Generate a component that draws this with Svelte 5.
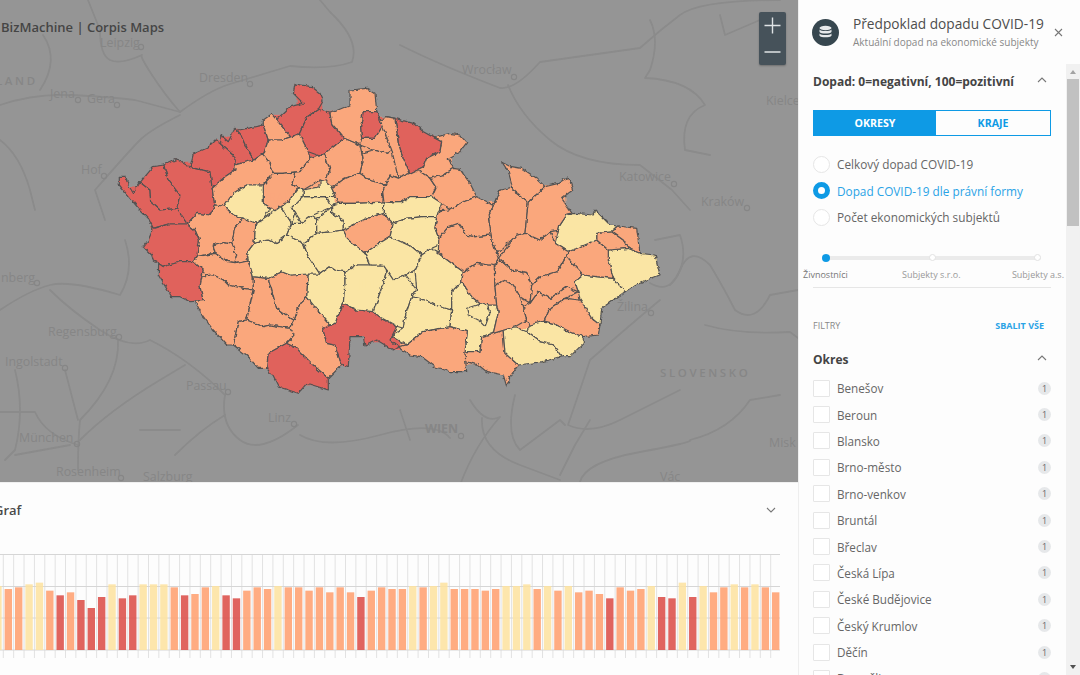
<script>
    // district outlines traced in two local frames, 3x scale
    const west = [
        ["r", "58,322 78,322 85,345 100,370 118,335 150,360 152,395 180,420 230,415 262,462 205,462 160,475 145,445 120,420 90,385 58,345"],
        ["r", "130,325 160,290 192,285 205,330 240,375 230,415 180,420 152,395 150,360 118,335"],
        ["r", "192,285 230,268 270,292 330,305 335,380 345,405 330,435 290,430 262,450 230,415 240,375 205,330"],
        ["r", "270,292 280,252 320,235 345,210 362,222 405,260 405,300 375,320 335,355 330,305"],
        ["r", "362,195 385,215 405,175 420,190 440,235 462,270 420,285 405,260 362,222"],
        ["r", "405,175 420,172 490,165 505,210 480,245 462,270 440,235 420,190"],
        ["o", "490,150 515,132 545,170 570,195 545,210 510,220 505,210 490,165"],
        ["r", "585,42 635,50 660,70 670,92 655,118 622,140 598,192 570,192 528,150 570,110 610,100 580,70"],
        ["r", "622,140 655,118 690,130 695,160 732,205 695,235 660,258 625,245 598,192"],
        ["o", "690,130 750,105 750,60 800,55 825,70 830,125 790,125 782,170 785,205 780,225 732,205 695,160"],
        ["r", "790,125 830,125 845,120 845,170 825,205 785,205 782,170"],
        ["o", "780,225 785,205 825,205 845,170 860,140 885,145 895,220 875,240 860,250 820,240"],
        ["o", "490,255 510,220 545,210 598,192 625,245 630,265 600,305 545,310 520,310 510,280"],
        ["o", "630,265 660,258 680,260 690,300 680,325 660,330 610,360 575,345 585,318 600,305"],
        ["o", "660,258 695,235 732,205 780,225 790,270 780,310 735,325 705,350 680,325 690,300 680,260"],
        ["o", "340,355 375,320 405,300 420,285 462,270 490,255 510,280 520,310 490,345 440,345 400,370 372,408 345,405"],
        ["o", "520,310 545,310 585,318 575,345 590,365 565,395 525,422 490,400 480,350 490,345"],
        ["y", "372,408 400,370 440,345 470,342 490,350 483,400 510,420 495,455 468,460 430,445 400,435"],
        ["o", "268,452 290,432 330,437 345,405 372,408 400,435 435,450 405,470 395,520 370,515 340,525 345,550 290,560 298,510 285,480"],
        ["o", "340,525 370,515 395,520 410,555 405,578 385,575 345,550"],
        ["o", "405,470 435,450 468,460 462,520 440,550 445,570 405,578 410,555 395,520"],
        ["r", "160,475 205,462 262,462 285,480 298,510 290,560 280,575 240,575 190,590 160,570 155,555 130,530 145,510"],
        ["r", "170,590 190,590 240,575 280,575 310,600 300,650 310,692 270,695 240,680 215,680 190,640 175,615"],
        ["o", "290,560 345,550 385,575 405,578 445,570 460,620 460,660 430,655 385,645 370,630 340,615 315,620 310,600 280,575"],
        ["o", "285,695 310,692 300,650 315,620 340,615 370,630 385,645 430,655 460,660 440,750 415,755 400,825 380,825 340,780 310,740"],
        ["o", "460,620 505,625 515,660 530,715 570,745 585,745 570,775 510,765 490,770 440,750 460,660"],
        ["o", "505,625 545,605 570,615 625,612 620,680 600,700 585,745 570,745 530,715 515,660"],
        ["o", "415,755 440,750 490,770 510,765 570,775 582,795 560,820 505,850 500,895 475,895 440,855 405,825"],
        ["r", "500,850 560,820 590,835 640,885 685,925 685,960 620,940 595,970 535,950 520,920 495,895"],
        ["o", "600,700 612,690 660,730 690,760 668,775 680,820 705,825 725,885 685,925 640,885 590,835 560,820 582,795 570,775 585,745"],
        ["r", "668,775 705,760 730,700 770,720 820,725 835,755 890,770 870,810 895,830 880,840 860,810 830,810 795,828 790,800 750,800 745,890 725,885 705,825 680,820"],
        ["y", "612,690 620,680 625,612 660,612 690,590 705,600 735,605 735,640 730,700 705,760 690,760 660,730"],
        ["y", "440,550 470,515 505,510 525,520 560,495 610,520 625,560 650,605 625,612 570,615 545,605 505,625 460,620 445,570"],
        ["y", "468,465 515,430 550,420 575,460 560,495 525,520 505,510 470,515"],
        ["y", "615,520 650,490 730,480 745,510 795,550 810,580 770,585 735,605 705,600 690,590 660,612 650,605 625,560"],
        ["y", "560,495 575,460 605,460 640,435 650,450 645,480 615,520 610,520"],
        ["y", "650,450 680,410 695,430 730,450 735,480 680,480 645,480"],
        ["y", "575,415 610,380 680,380 680,410 650,430 605,460 585,430"],
        ["y", "548,420 565,400 590,365 610,360 610,380 575,415 585,430 575,460 550,420"],
        ["y", "605,350 660,350 670,335 690,340 705,380 680,380 610,380"],
        ["o", "700,350 735,325 780,315 810,330 848,340 848,365 830,395 770,400 715,400"],
        ["y", "695,405 715,400 770,400 830,395 855,385 860,410 850,430 790,450 740,480 730,450 695,430"],
        ["o", "735,480 790,450 850,430 880,460 870,500 830,525 798,550 745,510"],
        ["o", "782,250 820,240 860,250 875,240 910,265 930,310 895,325 870,315 848,340 810,330 780,310 790,270"],
        ["y", "740,600 770,585 850,585 860,600 850,640 820,725 770,720 730,700 735,640"],
    ];
    const east = [
        ["r", "45,55 100,70 130,95 185,125 180,155 140,175 130,200 90,220 70,175 55,130"],
        ["o", "130,200 140,175 180,155 185,125 165,108 210,100 240,105 260,128 240,155 205,175 220,205 190,225 150,235 115,215"],
        ["o", "0,60 20,50 45,55 55,130 70,175 90,220 55,235 35,150"],
        ["o", "25,228 60,235 90,220 120,225 150,237 168,262 155,290 125,290 90,290 65,305 30,295 5,310 5,280"],
        ["o", "155,240 195,225 220,205 240,208 270,250 290,290 240,310 210,330 185,310 155,290 168,262"],
        ["y", "10,320 60,310 100,290 150,290 185,320 170,350 130,350 80,355 40,370 10,345"],
        ["y", "40,370 80,355 130,350 170,350 165,385 190,435 155,445 125,465 95,440 40,405"],
        ["y", "-42,465 -10,435 35,405 95,440 125,465 105,510 75,525 40,540 15,510 10,495 -30,490"],
        ["y", "10,550 20,510 15,510 40,540 75,525 110,570 95,590 75,650 70,685 25,670 -10,640 -20,635"],
        ["y", "95,590 135,600 165,615 215,630 210,680 130,695 80,735 40,710 70,685 75,650"],
        ["y", "105,510 125,465 155,445 175,460 250,515 245,545 215,575 210,630 165,615 135,600 95,590 110,570"],
        ["y", "210,630 215,575 245,545 275,590 305,615 350,615 355,635 340,700 305,710 300,755 255,755 262,695 210,680"],
        ["o", "50,740 80,735 130,695 210,685 262,700 255,755 260,815 210,815 165,800 125,770 90,765"],
        ["o", "255,755 300,755 305,710 345,705 372,700 375,760 415,795 390,830 380,860 370,825 320,815 295,795 260,785"],
        ["y", "372,700 405,680 440,695 480,725 520,735 545,770 490,785 420,790 410,795 375,760"],
        ["y", "450,675 480,655 520,670 570,695 610,710 610,730 570,770 545,770 520,735 480,725 440,695"],
        ["o", "250,505 290,490 340,495 345,560 350,615 305,615 275,590 245,545"],
        ["o", "335,510 355,475 395,510 440,520 455,555 450,610 420,590 400,555 370,540 350,570 345,520"],
        ["o", "350,615 350,570 370,540 400,555 420,590 430,620 440,660 405,680 345,700 355,635"],
        ["o", "430,620 450,610 475,575 510,595 560,560 595,575 555,595 510,625 495,655 450,675 440,660"],
        ["o", "455,555 480,530 530,515 565,470 610,525 585,545 595,575 560,560 510,595 475,575 450,610"],
        ["o", "495,655 510,625 555,595 600,600 635,655 660,675 655,705 610,710 570,695 520,670"],
        ["y", "585,545 610,525 650,530 700,535 735,575 700,600 665,625 660,665 635,655 600,600 595,575"],
        ["y", "685,450 745,445 780,460 825,465 840,525 800,540 750,565 735,575 700,535 680,480"],
        ["o", "565,455 650,420 680,460 685,500 700,535 650,530 610,525 565,470"],
        ["o", "650,400 695,395 730,420 732,445 685,450 680,460 650,420"],
        ["o", "715,378 770,385 785,455 745,445 732,445 730,420 695,395"],
        ["y", "525,430 550,385 560,345 585,340 640,345 645,330 665,350 690,375 710,380 695,395 650,400 650,420 565,450"],
        ["o", "355,465 410,405 435,400 480,420 510,395 525,430 565,450 545,495 530,515 480,530 455,555 440,520 395,510 355,475"],
        ["o", "325,350 350,310 360,270 385,265 400,270 445,305 430,400 410,405 355,460 340,420"],
        ["o", "445,305 495,260 535,250 565,230 578,270 545,295 575,330 550,345 530,390 510,395 480,420 435,400"],
        ["o", "365,185 395,200 425,205 470,235 495,260 445,305 400,270 385,215"],
        ["o", "175,450 190,410 205,380 235,370 260,405 285,410 330,405 355,465 350,490 340,495 290,490 250,505 210,490"],
        ["o", "170,350 185,335 210,330 240,310 290,290 325,310 355,280 325,350 340,420 330,405 285,410 260,405 235,370 205,380 190,410 165,385"],
    ];

    function parse(list, ox, oy) {
        return list.map(([c, pts]) => ({
            c,
            pts: pts.split(" ").map((p) => {
                const [x, y] = p.split(",").map(Number);
                return [ox + x / 3, oy + y / 3];
            }),
        }));
    }

    function segInfo(v, a, b) {
        const dx = b[0] - a[0];
        const dy = b[1] - a[1];
        const len2 = dx * dx + dy * dy || 1;
        const t = ((v[0] - a[0]) * dx + (v[1] - a[1]) * dy) / len2;
        const px = a[0] + t * dx;
        const py = a[1] + t * dy;
        return { t, px, py, d: Math.hypot(v[0] - px, v[1] - py) };
    }

    // the outlines were traced one by one, so pull neighbouring borders together
    function snapBorders(polys) {
        const shared = [];
        for (const poly of polys) {
            const out = [];
            for (const v of poly.pts) {
                let hit = shared.find((s) => Math.hypot(s[0] - v[0], s[1] - v[1]) < 4.5);
                if (!hit) {
                    hit = [v[0], v[1]];
                    shared.push(hit);
                }
                if (out[out.length - 1] !== hit && !out.includes(hit)) out.push(hit);
            }
            poly.pts = out;
        }
        for (const v of shared) {
            let best = null;
            for (const poly of polys) {
                if (poly.pts.includes(v)) continue;
                poly.pts.forEach((a, i) => {
                    const b = poly.pts[(i + 1) % poly.pts.length];
                    if (a === v || b === v) return;
                    const s = segInfo(v, a, b);
                    if (s.t > 0.05 && s.t < 0.95 && s.d < 5.5 && (!best || s.d < best.d)) best = s;
                });
            }
            if (best) {
                v[0] = best.px;
                v[1] = best.py;
            }
        }
        for (const poly of polys) {
            const out = [];
            poly.pts.forEach((a, i) => {
                const b = poly.pts[(i + 1) % poly.pts.length];
                out.push(a);
                const extra = shared
                    .filter((v) => v !== a && v !== b && !poly.pts.includes(v))
                    .map((v) => ({ v, s: segInfo(v, a, b) }))
                    .filter(({ s }) => s.t > 0 && s.t < 1 && s.d < 1.2)
                    .sort((p, q) => p.s.t - q.s.t);
                for (const { v } of extra) out.push(v);
            });
            poly.pts = out;
        }
        return polys;
    }

    const districts = snapBorders([...parse(west, 100, 70), ...parse(east, 380, 100)]).map((p) => ({
        c: p.c,
        points: p.pts.map((v) => v[0].toFixed(1) + "," + v[1].toFixed(1)).join(" "),
    }));
    // Brno-město sits on top of Brno-venkov, so it stays out of the snapping
    districts.push({ c: "y", points: "466.7,308.3 476.7,305 486.7,303.3 490,313.3 485,326.7 478.3,320 468.3,315" });

    const roads = [
        "M180 112 Q165 95 152 75 T142 55 Q120 65 110 60 T100 30 L88 0",
        "M180 112 Q210 90 230 84 T290 66 Q330 70 352 62 Q360 40 330 12 L320 0",
        "M0 105 Q30 95 60 95 T135 100 L180 112",
        "M180 115 Q150 130 140 140 T95 190 L105 220",
        "M43 35 Q60 60 40 90",
        "M0 140 Q20 155 30 190 L35 210",
        "M400 45 Q440 65 500 88 Q515 90 540 62 Q590 55 640 48 Q660 30 680 15 T780 0",
        "M508 85 Q520 115 550 140 T640 165 L672 190 L690 210",
        "M720 15 L725 35 L760 20",
        "M650 20 Q660 40 650 70 L645 78 Q690 80 705 105 Q680 115 685 150 L710 155",
        "M660 300 Q630 325 590 360 Q580 390 568 425 Q590 435 620 420 T680 390",
        "M705 325 Q740 335 790 332 L798 338",
        "M650 283 Q670 295 680 270 T710 265 Q725 290 735 310 Q755 325 770 295 L798 290",
        "M655 240 L680 235 Q690 265 670 285",
        "M0 310 Q30 290 50 285 T120 295 Q135 270 125 240",
        "M50 290 Q70 310 100 330 T150 340 Q190 360 225 395",
        "M118 340 Q120 380 80 420 Q78 440 78 470",
        "M65 370 L78 420",
        "M80 440 Q110 410 160 380 L185 365",
        "M0 412 L35 412 Q45 435 78 445",
        "M15 370 Q25 410 15 450 L5 460",
        "M225 395 Q220 425 240 440 T298 425",
        "M15 455 L70 445",
        "M140 430 L180 430",
        "M175 455 Q200 430 225 415",
        "M300 435 Q325 450 380 435 T450 438",
        "M400 410 L410 440",
        "M470 400 Q485 425 500 417 Q475 445 460 485",
        "M482 418 Q480 450 520 465 T560 480",
        "M515 395 Q505 435 520 450 L560 420 L565 425",
        "M580 482 Q585 462 640 452 T690 440 Q730 430 750 400 L780 395",
        "M560 475 L575 445 L590 420",
    ];

    const labels = [
        { t: "Leipzig", x: 100, y: 47 }, { t: "Dresden", x: 199, y: 82 },
        { t: "Jena", x: 50, y: 98 }, { t: "Gera", x: 87, y: 103 },
        { t: "Hof", x: 81, y: 174 }, { t: "Wrocław", x: 462, y: 74 },
        { t: "Kielce", x: 766, y: 105 }, { t: "Katowice", x: 619, y: 181 },
        { t: "Kraków", x: 701, y: 206 }, { t: "Žilina", x: 617, y: 311 },
        { t: "Misk", x: 769, y: 447 }, { t: "Vác", x: 660, y: 481 },
        { t: "nberg", x: 1, y: 282 }, { t: "Regensburg", x: 48, y: 336 },
        { t: "Ingolstadt", x: 5, y: 366 }, { t: "Passau", x: 186, y: 390 },
        { t: "Linz", x: 268, y: 422 }, { t: "München", x: 19, y: 442 },
        { t: "Rosenheim", x: 56, y: 476 }, { t: "Salzburg", x: 143, y: 481 },
        { t: "Jihlava", x: 358, y: 288 }, { t: "Ostrava", x: 567, y: 235 },
        { t: "Zlín", x: 541, y: 310 }, { t: "Pardubice", x: 352, y: 207 },
        { t: "PRAHA", x: 261, y: 202 }, { t: "Brno", x: 452, y: 312 },
    ];
    const towns = [
        [141, 47], [250, 84], [78, 100], [117, 105], [104, 176], [514, 77], [674, 184],
        [747, 208], [651, 313], [37, 283], [119, 337], [65, 368], [228, 392], [294, 424],
        [77, 444], [121, 478], [461, 436],
    ];

    // bar tops in the same 3x frame, baseline is 510
    const barData = "y318 o327 o322 y313 y308 o332 r346 o337 r360 r384 r351 y313 r355 r346 y313 y313 y313 o322 r346 o342 o322 y318 r346 r355 o332 o322 o327 y318 o322 o322 o332 o322 o337 o322 o337 r351 o332 o322 o327 o327 y318 o322 y318 y308 o327 o327 o327 o332 o327 y318 y318 y313 o327 y318 o332 y318 o337 o332 o342 r355 o322 o332 o327 y318 r351 r355 y308 r351 y318 o337 o322 y313 o322 y313 o322 o337".split(" ");
    const bars = barData.map((b, i) => ({
        c: b[0],
        x: -2.04 + 10.37 * i - 3.7,
        h: (510 - Number(b.slice(1))) / 3,
    }));
    const gridX = Array.from({ length: 75 }, (_, i) => 3.3 + 10.37 * i);

    const radios = [
        { label: "Celkový dopad COVID-19", active: false },
        { label: "Dopad COVID-19 dle právní formy", active: true },
        { label: "Počet ekonomických subjektů", active: false },
    ];
    const okresy = ["Benešov", "Beroun", "Blansko", "Brno-město", "Brno-venkov", "Bruntál", "Břeclav", "Česká Lípa", "České Budějovice", "Český Krumlov", "Děčín", "Domažlice"];
</script>

<div class="page">
    <div class="left">
        <div class="map">
            <svg class="map-svg" width="798" height="482" viewBox="0 0 798 482">
                <defs>
                    <filter id="rough" filterUnits="userSpaceOnUse" x="0" y="0" width="798" height="482" color-interpolation-filters="sRGB">
                        <feTurbulence type="fractalNoise" baseFrequency="0.2" numOctaves="2" seed="4" />
                        <feDisplacementMap in="SourceGraphic" scale="4" xChannelSelector="R" yChannelSelector="G" />
                    </filter>
                    <filter id="closeGaps" filterUnits="userSpaceOnUse" x="0" y="0" width="798" height="482" color-interpolation-filters="sRGB">
                        <feMorphology operator="dilate" radius="4" />
                        <feMorphology operator="erode" radius="4" />
                    </filter>
                    <filter id="soft" filterUnits="userSpaceOnUse" x="0" y="0" width="798" height="482">
                        <feGaussianBlur stdDeviation="0.5" />
                    </filter>
                </defs>
                <g filter="url(#soft)">
                    {#each roads as d}
                        <path class="road" {d} />
                    {/each}
                    {#each towns as [cx, cy]}
                        <circle class="town" {cx} {cy} r="2.6" />
                    {/each}
                </g>
                {#each labels as l}
                    <text class="label" x={l.x} y={l.y}>{l.t}</text>
                {/each}
                <text class="label caps" x="-4" y="85">LAND</text>
                <text class="label caps" x="660" y="377">SLOVENSKO</text>
                <text class="label wien" x="425" y="433">WIEN</text>
                <g class="cz" filter="url(#rough)">
                    <g filter="url(#closeGaps)">
                        {#each districts as d}
                            <polygon class="fill {d.c}" points={d.points} />
                        {/each}
                    </g>
                    {#each districts as d}
                        <polygon class="district {d.c}" points={d.points} />
                    {/each}
                </g>
            </svg>
            <div class="brand">BizMachine | Corpis Maps</div>
            <div class="zoom">
                <svg width="27" height="53" viewBox="0 0 27 53">
                    <path d="M5.5 13.5 H21.5 M13.5 5.5 V21.5 M5.5 40 H21.5" />
                </svg>
            </div>
        </div>
        <div class="graf">
            <div class="graf-head">
                <span class="graf-title">Graf</span>
                <svg class="chev" width="10" height="6" viewBox="0 0 10 6"><path d="M1 1 L5 5 L9 1" /></svg>
            </div>
            <svg class="chart" width="798" height="112" viewBox="0 0 798 112">
                {#each gridX as x}
                    <line class="grid" x1={x} x2={x} y1="0" y2="104" />
                {/each}
                <line class="grid-h" x1="0" x2="780" y1="0.5" y2="0.5" />
                <line class="grid-h" x1="0" x2="780" y1="32.5" y2="32.5" />
                <line class="grid-h" x1="0" x2="780" y1="64" y2="64" />
                <line class="grid-h" x1="0" x2="780" y1="96" y2="96" />
                {#each bars as b}
                    <rect class="bar {b.c}" x={b.x} y={96 - b.h} width="7.4" height={b.h} />
                {/each}
            </svg>
        </div>
    </div>

    <aside class="side">
        <header class="side-head">
            <div class="db">
                <svg width="15" height="15" viewBox="0 0 15 15">
                    <ellipse cx="7.5" cy="3" rx="6" ry="2.2" />
                    <path d="M1.5 4.6 C3 6.6 12 6.6 13.5 4.6 V7 C12 9 3 9 1.5 7 Z" />
                    <path d="M1.5 8.4 C3 10.4 12 10.4 13.5 8.4 V10.8 C12 12.8 3 12.8 1.5 10.8 Z" />
                </svg>
            </div>
            <div class="head-text">
                <div class="title">Předpoklad dopadu COVID-19</div>
                <div class="sub">Aktuální dopad na ekonomické subjekty</div>
            </div>
            <svg class="close" width="9" height="9" viewBox="0 0 9 9"><path d="M1 1 L8 8 M8 1 L1 8" /></svg>
        </header>
        <div class="side-scroll">
            <div class="content">
                <div class="sec-head first">
                    <span>Dopad: 0=negativní, 100=pozitivní</span>
                    <svg class="chev up" width="10" height="6" viewBox="0 0 10 6"><path d="M1 5 L5 1 L9 5" /></svg>
                </div>
                <div class="tabs">
                    <div class="tab on">OKRESY</div>
                    <div class="tab">KRAJE</div>
                </div>
                <div class="radios">
                    {#each radios as r}
                        <div class="radio-row" class:active={r.active}>
                            <span class="radio"></span>
                            <span>{r.label}</span>
                        </div>
                    {/each}
                </div>
                <div class="slider">
                    <div class="track">
                        <span class="stop on"></span>
                        <span class="stop"></span>
                        <span class="stop"></span>
                    </div>
                    <div class="stops">
                        <span>Živnostníci</span>
                        <span>Subjekty s.r.o.</span>
                        <span>Subjekty a.s.</span>
                    </div>
                </div>
                <div class="filters-head">
                    <span class="filtry">FILTRY</span>
                    <span class="sbalit">SBALIT VŠE</span>
                </div>
                <div class="sec-head okres">
                    <span>Okres</span>
                    <svg class="chev up" width="10" height="6" viewBox="0 0 10 6"><path d="M1 5 L5 1 L9 5" /></svg>
                </div>
                <div class="list">
                    {#each okresy as o}
                        <div class="row">
                            <span class="box"></span>
                            <span class="name">{o}</span>
                            <span class="count">1</span>
                        </div>
                    {/each}
                </div>
            </div>
            <div class="scrollbar">
                <span class="arrow top"></span>
                <span class="thumb"></span>
                <span class="arrow bottom"></span>
            </div>
        </div>
    </aside>
</div>

<style>
    :global(body) {
        margin: 0;
        font-family: "Open Sans", sans-serif;
    }
    .page {
        display: flex;
        width: 1080px;
        height: 675px;
        overflow: hidden;
        background: #fdfdfd;
    }
    .left {
        width: 798px;
        flex: none;
        display: flex;
        flex-direction: column;
    }
    .map {
        position: relative;
        height: 482px;
        background: #959595;
        overflow: hidden;
        flex: none;
    }
    .map-svg {
        display: block;
    }
    .road {
        fill: none;
        stroke: #8b8b8b;
        stroke-width: 1.8;
        stroke-linejoin: round;
        stroke-linecap: round;
    }
    .town {
        fill: none;
        stroke: #868686;
        stroke-width: 1.2;
    }
    .label {
        font-size: 12.4px;
        fill: #868686;
        font-family: "Open Sans", sans-serif;
    }
    .caps {
        font-weight: 600;
        letter-spacing: 2.6px;
        font-size: 11.5px;
    }
    .wien {
        font-weight: 700;
    }
    .cz {
        opacity: 0.96;
    }
    .fill.r, .district.r { fill: #e4605a; }
    .fill.o, .district.o { fill: #ffa87c; }
    .fill.y, .district.y { fill: #ffe9a5; }
    .district {
        stroke: #505050;
        stroke-width: 1.2;
        stroke-linejoin: round;
    }
    .brand {
        position: absolute;
        left: 1px;
        top: 19px;
        font-size: 13px;
        font-weight: 600;
        color: #454545;
        line-height: 16px;
    }
    .zoom {
        position: absolute;
        left: 759px;
        top: 12px;
        width: 27px;
        height: 53px;
        background: #46525a;
        border-radius: 2px;
        box-shadow: 0 1px 2px rgba(0, 0, 0, 0.25);
    }
    .zoom svg {
        display: block;
    }
    .zoom path {
        stroke: #dfe3e5;
        stroke-width: 1.4;
        fill: none;
    }
    .graf {
        flex: 1;
        min-height: 0;
        background: #fdfdfd;
        border-top: 2px solid #f0f0f0;
        margin-top: -1px;
    }
    .graf-head {
        display: flex;
        align-items: center;
        justify-content: space-between;
        height: 53px;
        padding: 1px 22px 0 0;
        margin-left: -6px;
        box-sizing: border-box;
    }
    .graf-title {
        font-size: 13px;
        font-weight: 600;
        color: #4a4a4a;
    }
    .chart {
        display: block;
        margin-top: 18px;
    }
    .grid {
        stroke: #e2e2e2;
        stroke-width: 1;
    }
    .grid-h {
        stroke: #d6d6d6;
        stroke-width: 1;
    }
    .bar { fill-opacity: 0.88; }
    .bar.r { fill: #dc4f49; }
    .bar.o { fill: #ffa071; }
    .bar.y { fill: #fde2a0; }
    .chev path, .close path {
        fill: none;
        stroke: #777;
        stroke-width: 1.1;
    }
    .side {
        width: 282px;
        flex: none;
        display: flex;
        flex-direction: column;
        background: #fdfdfd;
        box-shadow: inset 1px 0 0 #eeeeee;
        color: #555;
    }
    .side-head {
        height: 64px;
        flex: none;
        display: flex;
        align-items: center;
        padding-left: 14px;
        box-sizing: border-box;
    }
    .db {
        width: 27px;
        height: 27px;
        border-radius: 50%;
        background: #37474f;
        display: flex;
        align-items: center;
        justify-content: center;
        flex: none;
    }
    .db svg {
        fill: #e8eaeb;
    }
    .head-text {
        margin-left: 14px;
        width: 199px;
    }
    .title {
        font-size: 13.7px;
        line-height: 18px;
        color: #4d4d4d;
        font-weight: 500;
        white-space: nowrap;
    }
    .sub {
        font-size: 10px;
        line-height: 14px;
        color: #888;
        margin-top: 2px;
        white-space: nowrap;
    }
    .close {
        margin-left: 2px;
    }
    .side-scroll {
        flex: 1;
        min-height: 0;
        display: flex;
        overflow: hidden;
    }
    .content {
        width: 238px;
        flex: none;
        padding: 0 15px;
    }
    .sec-head {
        display: flex;
        align-items: center;
        justify-content: space-between;
        font-size: 12px;
        font-weight: 700;
        color: #444;
    }
    .sec-head .chev {
        margin: -3px 4px 0 0;
    }
    .sec-head.first {
        height: 34px;
        margin-top: 0;
        padding-bottom: 1px;
    }
    .tabs {
        display: flex;
        height: 26px;
        margin-top: 11px;
        border: 1px solid #0e9ae5;
        box-sizing: border-box;
    }
    .tab {
        flex: 1;
        display: flex;
        align-items: center;
        justify-content: center;
        font-size: 10.6px;
        font-weight: 700;
        color: #0e9ae5;
    }
    .tab.on {
        flex: none;
        width: 122px;
        background: #0e9ae5;
        color: #fff;
    }
    .radios {
        margin-top: 15px;
    }
    .radio-row {
        display: flex;
        align-items: center;
        gap: 7px;
        height: 26.5px;
        font-size: 11.8px;
        color: #666;
    }
    .radio-row.active {
        color: #2aa3e6;
    }
    .radio {
        width: 17px;
        height: 17px;
        box-sizing: border-box;
        border-radius: 50%;
        border: 1px solid #e6e6e6;
        background: #fff;
        flex: none;
    }
    .active .radio {
        border: 5.5px solid #0e9ae5;
    }
    .slider {
        margin-top: 25px;
        border-bottom: 1px solid #e6e6e6;
        height: 31.5px;
    }
    .track {
        display: flex;
        align-items: center;
        justify-content: space-between;
        height: 4px;
        margin: 0 10px;
        background: #ebebeb;
        border-radius: 2px;
    }
    .stop {
        width: 7px;
        height: 7px;
        box-sizing: border-box;
        border-radius: 50%;
        background: #fff;
        border: 1px solid #e2e2e2;
    }
    .stop.on {
        width: 8px;
        height: 8px;
        margin-left: -1px;
        background: #0e9ae5;
        border: none;
    }
    .stops {
        display: flex;
        justify-content: space-between;
        margin: 9.5px -13px 0 -10px;
        font-size: 9px;
        line-height: 12px;
        color: #999;
    }
    .stops span:nth-child(2) {
        margin-left: 3px;
    }
    .stops span:first-child {
        color: #777;
    }
    .filters-head {
        display: flex;
        justify-content: space-between;
        align-items: center;
        margin-top: 30.5px;
        height: 14px;
        padding-right: 7px;
    }
    .filtry {
        font-size: 9px;
        color: #888;
    }
    .sbalit {
        font-size: 9px;
        font-weight: 700;
        color: #2aa3e6;
    }
    .sec-head.okres {
        height: 18px;
        margin-top: 17.5px;
    }
    .list {
        margin-top: 7px;
    }
    .row {
        display: flex;
        align-items: center;
        height: 26.4px;
        font-size: 11.7px;
        color: #666;
    }
    .box {
        width: 17px;
        height: 17px;
        box-sizing: border-box;
        border: 1px solid #e6e6e6;
        border-radius: 1px;
        background: #fff;
        flex: none;
    }
    .name {
        margin-left: 7px;
        flex: 1;
    }
    .count {
        width: 13px;
        height: 13px;
        border-radius: 50%;
        background: #e6e8ea;
        color: #666;
        font-size: 9px;
        line-height: 13px;
        text-align: center;
    }
    .scrollbar {
        width: 14px;
        flex: none;
        background: #f1f1f1;
        position: relative;
        display: flex;
        flex-direction: column;
        align-items: center;
    }
    .thumb {
        width: 12px;
        height: 147px;
        margin-top: 15px;
        background: #c1c1c1;
    }
    .arrow {
        position: absolute;
        width: 0;
        height: 0;
        border-left: 3.5px solid transparent;
        border-right: 3.5px solid transparent;
    }
    .arrow.top {
        top: 6px;
        border-bottom: 4px solid #a3a3a3;
    }
    .arrow.bottom {
        bottom: 6px;
        border-top: 4px solid #505050;
    }
</style>
